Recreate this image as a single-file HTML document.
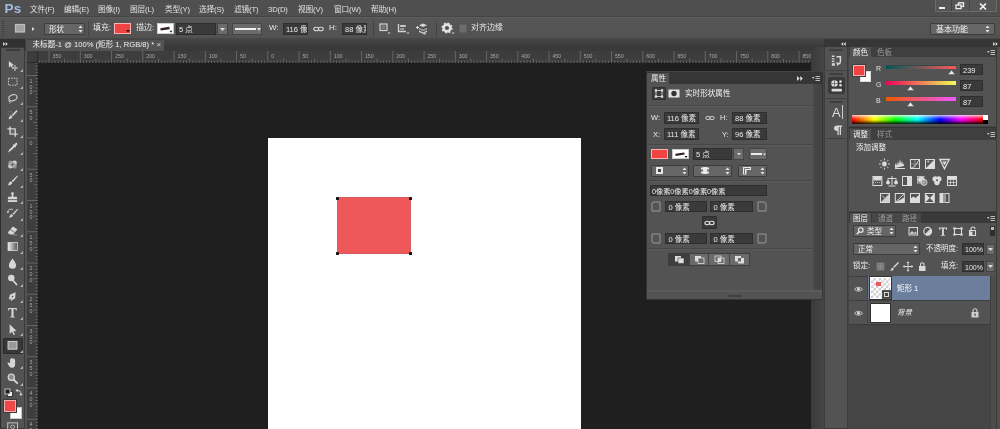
<!DOCTYPE html>
<html lang="zh-CN">
<head>
<meta charset="utf-8">
<title>Photoshop</title>
<style>
*{box-sizing:border-box;margin:0;padding:0}
html,body{width:1000px;height:429px;overflow:hidden;background:#535353}
body{position:relative;will-change:transform;font-family:"Liberation Sans","Noto Sans CJK SC",sans-serif;font-size:8px;color:#e6e6e6;line-height:1}
.a{position:absolute}
.t{position:absolute;white-space:nowrap;color:#e8e8e8}
#menubar{left:0;top:0;width:1000px;height:17px;background:#4f4f4f;border-bottom:1px solid #444}
#menubar .t{top:5.5px;font-size:7.7px;color:#e0e0e0;letter-spacing:-0.15px}
#optbar{left:0;top:17px;width:1000px;height:22px;background:linear-gradient(#565656,#525252);border-top:1px solid #5e5e5e;border-bottom:1px solid #484848}
#optbar .t{font-size:8px;top:6px}
.inp{position:absolute;background:#3a3a3a;border:1px solid #2e2e2e;color:#e8e8e8;font-size:7.5px;white-space:nowrap;overflow:hidden;padding:2px 0 0 2px}
.dd{position:absolute;background:#666;border:1px solid #3c3c3c;border-radius:1px;color:#f0f0f0;font-size:8px;white-space:nowrap;padding:2px 0 0 4px}
#tabbar{left:0;top:39px;width:1000px;height:12px;background:linear-gradient(#464646,#3a3a3a 60%,#393939)}
#canvas{left:38px;top:63px;width:773px;height:366px;background:#1f1f1f}
#doc{left:268px;top:138px;width:313px;height:291px;background:#fff}
#shape{left:337px;top:197px;width:74px;height:57px;background:#ee5858;border:1px solid #d85c5c}
.dot{position:absolute;width:3px;height:3px;background:#151515;border-radius:0.5px}
#hruler{left:27px;top:51px;width:786px;height:12px;background:#3d3d3d;border-bottom:1px solid #2a2a2a}
#vruler{left:27px;top:63px;width:11px;height:366px;background:#3d3d3d;border-right:1px solid #2a2a2a}
#tools{left:0;top:47px;width:25px;height:382px;background:#535353;border:1px solid #3a3a3a;border-left:1px solid #2c2c2c}
</style>
</head>
<body>

<!-- MENU BAR -->
<div id="menubar" class="a">
  <div class="t" style="left:4.5px;top:1.5px;font-size:13.5px;font-weight:bold;color:#a3bbe2;letter-spacing:0.2px">Ps</div>
  <div class="t" style="left:30px">文件(F)</div>
  <div class="t" style="left:64px">编辑(E)</div>
  <div class="t" style="left:98px">图像(I)</div>
  <div class="t" style="left:130px">图层(L)</div>
  <div class="t" style="left:165px">类型(Y)</div>
  <div class="t" style="left:199px">选择(S)</div>
  <div class="t" style="left:234px">滤镜(T)</div>
  <div class="t" style="left:268px">3D(D)</div>
  <div class="t" style="left:298px">视图(V)</div>
  <div class="t" style="left:334px">窗口(W)</div>
  <div class="t" style="left:371px">帮助(H)</div>
  <div class="a" style="left:935px;top:0;width:62px;height:12px;background:#565656;border:1px solid #6a6a6a;border-top:none"></div>
  <div class="a" style="left:951px;top:0;width:1px;height:11px;background:#444"></div>
  <div class="a" style="left:969px;top:0;width:1px;height:11px;background:#444"></div>
  <div class="a" style="left:939px;top:7px;width:6px;height:2px;background:#f0f0f0"></div>
  <svg class="a" style="left:955px;top:2px" width="10" height="8" viewBox="0 0 10 8"><rect x="3.5" y="0.8" width="5" height="3.6" fill="none" stroke="#f0f0f0" stroke-width="1.3"/><rect x="1" y="3" width="5" height="3.6" fill="#565656" stroke="#f0f0f0" stroke-width="1.3"/></svg>
  <svg class="a" style="left:979px;top:3px" width="8" height="7" viewBox="0 0 8 7"><path d="M1 0.5L7 6.5M7 0.5L1 6.5" stroke="#f4f4f4" stroke-width="1.6"/></svg>
</div>

<!-- OPTIONS BAR -->
<div id="optbar" class="a">
  <!-- grip -->
  <div class="a" style="left:2px;top:3px;width:2px;height:15px;background:repeating-linear-gradient(#3a3a3a 0 1px,#5a5a5a 1px 2px)"></div>
  <!-- tool preset: rectangle -->
  <svg class="a" style="left:14px;top:5px" width="24" height="12" viewBox="0 0 24 12"><rect x="1.5" y="1.5" width="9" height="7.500" fill="#a2a2a2" stroke="#c0c0c0" stroke-width="1.2"/><path d="M18 4 L20.5 6 L18 8Z" fill="#e0e0e0"/></svg>
  <div class="dd" style="left:44px;top:5px;width:41px;height:12px;font-size:7.5px">形状</div>
  <svg class="a" style="left:78px;top:7px" width="5" height="8" viewBox="0 0 5 8"><path d="M0.5 3 L2.5 0.5 L4.5 3Z M0.5 5 L2.5 7.5 L4.5 5Z" fill="#e6e6e6"/></svg>
  <div class="a" style="left:88px;top:3px;width:1px;height:16px;background:#444"></div>
  <div class="t" style="left:93px">填充:</div>
  <div class="a" style="left:114px;top:5px;width:17px;height:11px;background:#f04444;border:1px solid #f8b4b4"></div>
  <svg class="a" style="left:126px;top:12px" width="4" height="3" viewBox="0 0 4 3"><path d="M0 0h4L2 2.600z" fill="#2a1010"/></svg>
  <div class="t" style="left:136px">描边:</div>
  <div class="a" style="left:157px;top:5px;width:17px;height:11px;background:#fff;border:1px solid #ccc"></div>
  <svg class="a" style="left:157px;top:5px" width="17" height="11" viewBox="0 0 17 11"><path d="M3.500 6.400 L12.500 5" stroke="#30201e" stroke-width="2.300"/><path d="M12.500 7.800h3l-1.500 1.900z" fill="#1a1a1a"/></svg>
  <div class="inp" style="left:176px;top:5px;width:40px;height:12px">5 点</div>
  <div class="a" style="left:217px;top:5px;width:11px;height:12px;background:#6b6b6b;border:1px solid #444"></div>
  <svg class="a" style="left:220px;top:10px" width="5" height="3" viewBox="0 0 5 3"><path d="M0 0 L5 0 L2.5 3Z" fill="#ddd"/></svg>
  <div class="a" style="left:232px;top:5px;width:30px;height:12px;background:#6b6b6b;border:1px solid #444;border-radius:1px"></div>
  <div class="a" style="left:235px;top:10px;width:21px;height:2px;background:#f0f0f0"></div>
  <svg class="a" style="left:257px;top:10px" width="4" height="3" viewBox="0 0 4 3"><path d="M0 0 L4 0 L2 3Z" fill="#ddd"/></svg>
  <div class="t" style="left:269px">W:</div>
  <div class="inp" style="left:283px;top:5px;width:25px;height:12px">116 像素</div>
  <svg class="a" style="left:313px;top:8px" width="11" height="6" viewBox="0 0 11 6"><ellipse cx="3.2" cy="3" rx="2.4" ry="1.8" fill="none" stroke="#d8d8d8" stroke-width="1.1"/><ellipse cx="7.8" cy="3" rx="2.4" ry="1.8" fill="none" stroke="#d8d8d8" stroke-width="1.1"/></svg>
  <div class="t" style="left:329px">H:</div>
  <div class="inp" style="left:342px;top:5px;width:25px;height:12px">88 像素</div>
  <div class="a" style="left:373px;top:3px;width:1px;height:16px;background:#444"></div>
  <!-- path ops -->
  <svg class="a" style="left:379px;top:5px" width="12" height="12" viewBox="0 0 12 12"><rect x="1" y="1" width="7" height="6.5" fill="none" stroke="#d4d4d4" stroke-width="1.2"/><path d="M2.5 3.2H6.5M2.5 5.2H6.5" stroke="#aaa" stroke-width=".8"/><path d="M8.5 9.5h3l-1.5 1.8z" fill="#ccc"/></svg>
  <svg class="a" style="left:397px;top:5px" width="13" height="12" viewBox="0 0 13 12"><path d="M1.5 1V8.5H9" fill="none" stroke="#d4d4d4" stroke-width="1.3"/><rect x="3.2" y="2" width="5.5" height="2" fill="#c8c8c8"/><rect x="3.2" y="5" width="4" height="2" fill="#999"/><path d="M9.5 9.5h3l-1.5 1.8z" fill="#ccc"/></svg>
  <svg class="a" style="left:415px;top:4px" width="14" height="14" viewBox="0 0 14 14"><path d="M1 5.5h3M2.5 4v3" stroke="#ddd" stroke-width="1"/><path d="M8 1.5l4 1.8-4 1.8-4-1.8z" fill="#d8d8d8"/><path d="M4 5.8l4 1.8 4-1.8v1.6l-4 1.8-4-1.8z" fill="#9a9a9a"/><path d="M4 8.6l4 1.8 4-1.8v1.4l-4 1.8-4-1.8z" fill="#d0d0d0"/><circle cx="9.5" cy="11.5" r="1.3" fill="#bbb"/></svg>
  <div class="a" style="left:436px;top:3px;width:1px;height:16px;background:#444"></div>
  <!-- gear -->
  <svg class="a" style="left:441px;top:4px" width="14" height="14" viewBox="0 0 14 14"><circle cx="6" cy="6" r="3.4" fill="none" stroke="#e2e2e2" stroke-width="2.6"/><circle cx="6" cy="6" r="4.9" fill="none" stroke="#e2e2e2" stroke-width="1.4" stroke-dasharray="1.9 1.95"/><path d="M10.5 10.5h3l-1.5 1.8z" fill="#ccc"/></svg>
  <div class="a" style="left:459px;top:6px;width:8px;height:9px;background:#6c6c6c;border:1px solid #5e5e5e"></div>
  <div class="t" style="left:471px">对齐边缘</div>
  <!-- workspace -->
  <div class="dd" style="left:930px;top:5px;width:65px;height:12px;padding-left:5px">基本功能</div>
  <svg class="a" style="left:985px;top:7px" width="5" height="8" viewBox="0 0 5 8"><path d="M0.5 3 L2.5 0.5 L4.5 3Z M0.5 5 L2.5 7.5 L4.5 5Z" fill="#e6e6e6"/></svg>
</div>

<!-- TAB BAR -->
<div id="tabbar" class="a">
  <div class="a" style="left:0;top:0;width:25px;height:8px;background:#303030"></div>
  <svg class="a" style="left:3px;top:2.5px" width="5" height="4" viewBox="0 0 6 5"><path d="M0 0L2.600 2.500 0 5zM3.200 0L5.800 2.500 3.200 5z" fill="#ddd"/></svg>
  <div class="a" style="left:26px;top:1px;width:138px;height:11px;background:#535353"></div>
  <div class="t" style="left:32.5px;top:2px;font-size:7.6px;color:#f0f0f0">未标题-1 @ 100% (矩形 1, RGB/8) *</div>
  <div class="t" style="left:156.5px;top:2px;font-size:8px;color:#ddd">×</div>
</div>

<!-- RULERS -->
<div id="hruler" class="a"></div>
<div id="vruler" class="a"></div>
<svg class="a" style="left:27px;top:51px" width="786" height="12" viewBox="0 0 786 12" font-family="Liberation Sans, sans-serif" font-size="5.3" fill="#a8a8a8"><path d="M12.68 9.5V12M15.80 9.5V12M18.93 9.5V12M25.18 9.5V12M28.30 9.5V12M31.43 9.5V12M34.55 9.5V12M40.80 9.5V12M43.93 9.5V12M47.05 9.5V12M50.18 9.5V12M56.43 9.5V12M59.55 9.5V12M62.68 9.5V12M65.80 9.5V12M72.05 9.5V12M75.18 9.5V12M78.30 9.5V12M81.43 9.5V12M87.68 9.5V12M90.80 9.5V12M93.93 9.5V12M97.05 9.5V12M103.30 9.5V12M106.43 9.5V12M109.55 9.5V12M112.68 9.5V12M118.93 9.5V12M122.05 9.5V12M125.18 9.5V12M128.30 9.5V12M134.55 9.5V12M137.68 9.5V12M140.80 9.5V12M143.93 9.5V12M150.18 9.5V12M153.30 9.5V12M156.43 9.5V12M159.55 9.5V12M165.80 9.5V12M168.93 9.5V12M172.05 9.5V12M175.18 9.5V12M181.43 9.5V12M184.55 9.5V12M187.68 9.5V12M190.80 9.5V12M197.05 9.5V12M200.18 9.5V12M203.30 9.5V12M206.43 9.5V12M212.68 9.5V12M215.80 9.5V12M218.93 9.5V12M222.05 9.5V12M228.30 9.5V12M231.43 9.5V12M234.55 9.5V12M237.68 9.5V12M243.93 9.5V12M247.05 9.5V12M250.18 9.5V12M253.30 9.5V12M259.55 9.5V12M262.68 9.5V12M265.80 9.5V12M268.93 9.5V12M275.18 9.5V12M278.30 9.5V12M281.43 9.5V12M284.55 9.5V12M290.80 9.5V12M293.93 9.5V12M297.05 9.5V12M300.18 9.5V12M306.43 9.5V12M309.55 9.5V12M312.68 9.5V12M315.80 9.5V12M322.05 9.5V12M325.18 9.5V12M328.30 9.5V12M331.43 9.5V12M337.68 9.5V12M340.80 9.5V12M343.93 9.5V12M347.05 9.5V12M353.30 9.5V12M356.43 9.5V12M359.55 9.5V12M362.68 9.5V12M368.93 9.5V12M372.05 9.5V12M375.18 9.5V12M378.30 9.5V12M384.55 9.5V12M387.68 9.5V12M390.80 9.5V12M393.93 9.5V12M400.18 9.5V12M403.30 9.5V12M406.43 9.5V12M409.55 9.5V12M415.80 9.5V12M418.93 9.5V12M422.05 9.5V12M425.18 9.5V12M431.43 9.5V12M434.55 9.5V12M437.68 9.5V12M440.80 9.5V12M447.05 9.5V12M450.18 9.5V12M453.30 9.5V12M456.43 9.5V12M462.68 9.5V12M465.80 9.5V12M468.93 9.5V12M472.05 9.5V12M478.30 9.5V12M481.43 9.5V12M484.55 9.5V12M487.68 9.5V12M493.93 9.5V12M497.05 9.5V12M500.18 9.5V12M503.30 9.5V12M509.55 9.5V12M512.67 9.5V12M515.80 9.5V12M518.92 9.5V12M525.17 9.5V12M528.30 9.5V12M531.42 9.5V12M534.55 9.5V12M540.80 9.5V12M543.92 9.5V12M547.05 9.5V12M550.17 9.5V12M556.42 9.5V12M559.55 9.5V12M562.67 9.5V12M565.80 9.5V12M572.05 9.5V12M575.17 9.5V12M578.30 9.5V12M581.42 9.5V12M587.67 9.5V12M590.80 9.5V12M593.92 9.5V12M597.05 9.5V12M603.30 9.5V12M606.42 9.5V12M609.55 9.5V12M612.67 9.5V12M618.92 9.5V12M622.05 9.5V12M625.17 9.5V12M628.30 9.5V12M634.55 9.5V12M637.67 9.5V12M640.80 9.5V12M643.92 9.5V12M650.17 9.5V12M653.30 9.5V12M656.42 9.5V12M659.55 9.5V12M665.80 9.5V12M668.92 9.5V12M672.05 9.5V12M675.17 9.5V12M681.42 9.5V12M684.55 9.5V12M687.67 9.5V12M690.80 9.5V12M697.05 9.5V12M700.17 9.5V12M703.30 9.5V12M706.42 9.5V12M712.67 9.5V12M715.80 9.5V12M718.92 9.5V12M722.05 9.5V12M728.30 9.5V12M731.42 9.5V12M734.55 9.5V12M737.67 9.5V12M743.92 9.5V12M747.05 9.5V12M750.17 9.5V12M753.30 9.5V12M759.55 9.5V12M762.67 9.5V12M765.80 9.5V12M768.92 9.5V12M775.17 9.5V12M778.30 9.5V12M781.42 9.5V12M784.55 9.5V12" stroke="#707070" stroke-width="0.8"/><path d="M37.68 7.5V12M68.93 7.5V12M100.18 7.5V12M131.43 7.5V12M162.68 7.5V12M193.93 7.5V12M225.18 7.5V12M256.43 7.5V12M287.68 7.5V12M318.93 7.5V12M350.18 7.5V12M381.43 7.5V12M412.68 7.5V12M443.93 7.5V12M475.18 7.5V12M506.43 7.5V12M537.67 7.5V12M568.92 7.5V12M600.17 7.5V12M631.42 7.5V12M662.67 7.5V12M693.92 7.5V12M725.17 7.5V12M756.42 7.5V12" stroke="#707070" stroke-width="0.8"/><path d="M22.05 0V12M53.30 0V12M84.55 0V12M115.80 0V12M147.05 0V12M178.30 0V12M209.55 0V12M240.80 0V12M272.05 0V12M303.30 0V12M334.55 0V12M365.80 0V12M397.05 0V12M428.30 0V12M459.55 0V12M490.80 0V12M522.05 0V12M553.30 0V12M584.55 0V12M615.80 0V12M647.05 0V12M678.30 0V12M709.55 0V12M740.80 0V12M772.05 0V12" stroke="#6a6a6a" stroke-width="0.9"/><text x="25.5" y="6.6">350</text><text x="56.7" y="6.6">300</text><text x="88.0" y="6.6">250</text><text x="119.2" y="6.6">200</text><text x="150.5" y="6.6">150</text><text x="181.7" y="6.6">100</text><text x="213.0" y="6.6">50</text><text x="244.2" y="6.6">0</text><text x="275.4" y="6.6">50</text><text x="306.7" y="6.6">100</text><text x="337.9" y="6.6">150</text><text x="369.2" y="6.6">200</text><text x="400.4" y="6.6">250</text><text x="431.7" y="6.6">300</text><text x="462.9" y="6.6">350</text><text x="494.2" y="6.6">400</text><text x="525.4" y="6.6">450</text><text x="556.7" y="6.6">500</text><text x="587.9" y="6.6">550</text><text x="619.2" y="6.6">600</text><text x="650.4" y="6.6">650</text><text x="681.7" y="6.6">700</text><text x="712.9" y="6.6">750</text><text x="744.2" y="6.6">800</text><text x="775.4" y="6.6">850</text></svg>
<svg class="a" style="left:27px;top:63px" width="11" height="366" viewBox="0 0 11 366" font-family="Liberation Sans, sans-serif" font-size="5.3" fill="#a8a8a8" text-anchor="middle"><path d="M8.5 0.00H11M8.5 3.12H11M8.5 6.25H11M8.5 9.38H11M8.5 15.62H11M8.5 18.75H11M8.5 21.88H11M8.5 25.00H11M8.5 31.25H11M8.5 34.38H11M8.5 37.50H11M8.5 40.62H11M8.5 46.88H11M8.5 50.00H11M8.5 53.12H11M8.5 56.25H11M8.5 62.50H11M8.5 65.62H11M8.5 68.75H11M8.5 71.88H11M8.5 78.12H11M8.5 81.25H11M8.5 84.38H11M8.5 87.50H11M8.5 93.75H11M8.5 96.88H11M8.5 100.00H11M8.5 103.12H11M8.5 109.38H11M8.5 112.50H11M8.5 115.62H11M8.5 118.75H11M8.5 125.00H11M8.5 128.12H11M8.5 131.25H11M8.5 134.38H11M8.5 140.62H11M8.5 143.75H11M8.5 146.88H11M8.5 150.00H11M8.5 156.25H11M8.5 159.38H11M8.5 162.50H11M8.5 165.62H11M8.5 171.88H11M8.5 175.00H11M8.5 178.12H11M8.5 181.25H11M8.5 187.50H11M8.5 190.62H11M8.5 193.75H11M8.5 196.88H11M8.5 203.12H11M8.5 206.25H11M8.5 209.38H11M8.5 212.50H11M8.5 218.75H11M8.5 221.88H11M8.5 225.00H11M8.5 228.12H11M8.5 234.38H11M8.5 237.50H11M8.5 240.62H11M8.5 243.75H11M8.5 250.00H11M8.5 253.12H11M8.5 256.25H11M8.5 259.38H11M8.5 265.62H11M8.5 268.75H11M8.5 271.88H11M8.5 275.00H11M8.5 281.25H11M8.5 284.38H11M8.5 287.50H11M8.5 290.62H11M8.5 296.88H11M8.5 300.00H11M8.5 303.12H11M8.5 306.25H11M8.5 312.50H11M8.5 315.62H11M8.5 318.75H11M8.5 321.88H11M8.5 328.12H11M8.5 331.25H11M8.5 334.38H11M8.5 337.50H11M8.5 343.75H11M8.5 346.88H11M8.5 350.00H11M8.5 353.12H11M8.5 359.38H11M8.5 362.50H11M8.5 365.62H11" stroke="#707070" stroke-width="0.8"/><path d="M6.5 28.12H11M6.5 59.38H11M6.5 90.62H11M6.5 121.88H11M6.5 153.12H11M6.5 184.38H11M6.5 215.62H11M6.5 246.88H11M6.5 278.12H11M6.5 309.38H11M6.5 340.62H11" stroke="#707070" stroke-width="0.8"/><path d="M0 12.50H11M0 43.75H11M0 75.00H11M0 106.25H11M0 137.50H11M0 168.75H11M0 200.00H11M0 231.25H11M0 262.50H11M0 293.75H11M0 325.00H11M0 356.25H11" stroke="#6a6a6a" stroke-width="0.9"/><text x="4" y="19.7">1</text><text x="4" y="25.5">0</text><text x="4" y="31.3">0</text><text x="4" y="51.0">5</text><text x="4" y="56.8">0</text><text x="4" y="82.2">0</text><text x="4" y="113.5">5</text><text x="4" y="119.2">0</text><text x="4" y="144.7">1</text><text x="4" y="150.5">0</text><text x="4" y="156.3">0</text><text x="4" y="175.9">1</text><text x="4" y="181.8">5</text><text x="4" y="187.5">0</text><text x="4" y="207.2">2</text><text x="4" y="213.0">0</text><text x="4" y="218.8">0</text><text x="4" y="238.4">2</text><text x="4" y="244.2">5</text><text x="4" y="250.0">0</text><text x="4" y="269.7">3</text><text x="4" y="275.5">0</text><text x="4" y="281.3">0</text><text x="4" y="300.9">3</text><text x="4" y="306.8">5</text><text x="4" y="312.6">0</text><text x="4" y="332.2">4</text><text x="4" y="338.0">0</text><text x="4" y="343.8">0</text><text x="4" y="363.4">4</text><text x="4" y="369.2">5</text><text x="4" y="375.1">0</text></svg>
<div class="a" style="left:27px;top:51px;width:11px;height:12px;background:#3d3d3d;border-right:1px solid #2a2a2a;border-bottom:1px solid #2a2a2a"></div>

<!-- CANVAS -->
<div id="canvas" class="a"></div>
<div id="doc" class="a"></div>
<div id="shape" class="a"></div>
<div class="dot" style="left:336px;top:197px"></div>
<div class="dot" style="left:409px;top:197px"></div>
<div class="dot" style="left:336px;top:252px"></div>
<div class="dot" style="left:409px;top:252px"></div>

<!-- LEFT TOOLS -->
<div id="tools" class="a">
<div class="a" style="left:5px;top:1px;width:14px;height:2px;background:#3c3c3c"></div>
<div class="a" style="left:2px;top:289.5px;width:20px;height:16px;background:#383838;border:1px solid #2a2a2a;border-radius:1px"></div>
<svg class="a" style="left:4.5px;top:10.5px" width="13" height="13" viewBox="0 0 16 16"><path d="M3.5 2.5L3.5 10.5L5.8 8.6L7.6 11.5L8.8 10.8L7.2 8L10 7.8Z" fill="#d6d6d6"/><path d="M11 8.2V14M8.1 11.1H13.9" stroke="#d6d6d6" stroke-width="1"/><path d="M11 7.4l1.3 1.6h-2.6zM11 14.8l1.3-1.6h-2.6zM7.3 11.1l1.6-1.3v2.6zM14.7 11.1l-1.6-1.3v2.6z" fill="#d6d6d6"/></svg>
<svg class="a" style="left:19px;top:21.0px" width="3" height="3" viewBox="0 0 3 3"><path d="M3 0V3H0Z" fill="#b0b0b0"/></svg>
<svg class="a" style="left:4.5px;top:27.0px" width="13" height="13" viewBox="0 0 16 16"><rect x="3" y="4" width="10.5" height="8.5" fill="none" stroke="#d6d6d6" stroke-width="1.1" stroke-dasharray="2 1.3"/></svg>
<svg class="a" style="left:19px;top:37.5px" width="3" height="3" viewBox="0 0 3 3"><path d="M3 0V3H0Z" fill="#b0b0b0"/></svg>
<svg class="a" style="left:4.5px;top:43.5px" width="13" height="13" viewBox="0 0 16 16"><ellipse cx="8.5" cy="7" rx="5.2" ry="3.6" transform="rotate(-20 8.5 7)" fill="none" stroke="#d6d6d6" stroke-width="1.3"/><path d="M4.2 9.6c-1.2.8-.8 2.4.6 2.2 1-.2.6 1.5-.2 2.4" fill="none" stroke="#d6d6d6" stroke-width="1.1"/></svg>
<svg class="a" style="left:19px;top:54.0px" width="3" height="3" viewBox="0 0 3 3"><path d="M3 0V3H0Z" fill="#b0b0b0"/></svg>
<svg class="a" style="left:4.5px;top:60.0px" width="13" height="13" viewBox="0 0 16 16"><path d="M12.8 2.6L7 8.8l1.3 1.3 6-6.2z" fill="#d6d6d6"/><path d="M6.6 9.4c-1.6-.2-2.4 1-2.6 2.4-.1.8-.8 1.2-1.4 1.3 2.6 1 5.2-.3 5.2-2.5z" fill="#d6d6d6"/><ellipse cx="5" cy="6.5" rx="2.8" ry="2.2" fill="none" stroke="#9c9c9c" stroke-width=".8" stroke-dasharray="1.2 1"/></svg>
<svg class="a" style="left:19px;top:70.5px" width="3" height="3" viewBox="0 0 3 3"><path d="M3 0V3H0Z" fill="#b0b0b0"/></svg>
<svg class="a" style="left:4.5px;top:76.5px" width="13" height="13" viewBox="0 0 16 16"><path d="M5 1.8V11.3H14.5M1.8 4.8H11.3V14.5" fill="none" stroke="#d6d6d6" stroke-width="1.7"/><path d="M4.2 12.2L12.4 3.8" stroke="#9c9c9c" stroke-width=".8"/></svg>
<svg class="a" style="left:19px;top:87.0px" width="3" height="3" viewBox="0 0 3 3"><path d="M3 0V3H0Z" fill="#b0b0b0"/></svg>
<svg class="a" style="left:4.5px;top:93.0px" width="13" height="13" viewBox="0 0 16 16"><path d="M13.2 2.2c.9.9.9 2 .1 2.8l-1.4 1.4.5.6-1 1-.7-.6-5 5-2 .7-.6.9-.7-.6.8-.7.7-2 5-5-.6-.7 1-1 .6.5L11.300 3c.5-.9 1.300-1.200 1.900-.8z" fill="#d6d6d6"/></svg>
<svg class="a" style="left:19px;top:103.5px" width="3" height="3" viewBox="0 0 3 3"><path d="M3 0V3H0Z" fill="#b0b0b0"/></svg>
<svg class="a" style="left:4.5px;top:109.5px" width="13" height="13" viewBox="0 0 16 16"><ellipse cx="8" cy="8" rx="6" ry="3.4" transform="rotate(-38 8 8)" fill="#d6d6d6"/><ellipse cx="8" cy="8" rx="6" ry="3.4" transform="rotate(38 8 8)" fill="#9c9c9c" opacity=".85"/><path d="M6.5 8h3M8 6.500v3" stroke="#444" stroke-width=".8"/></svg>
<svg class="a" style="left:19px;top:120.0px" width="3" height="3" viewBox="0 0 3 3"><path d="M3 0V3H0Z" fill="#b0b0b0"/></svg>
<svg class="a" style="left:4.5px;top:126.0px" width="13" height="13" viewBox="0 0 16 16"><path d="M14 1.800L7 8.600l1.500 1.500 6.200-7.200z" fill="#d6d6d6"/><path d="M6.400 9.300c-1.800-.3-2.800 1-3 2.600-.1.900-.9 1.400-1.600 1.500 3 1.100 6-.4 5.900-2.800z" fill="#d6d6d6"/></svg>
<svg class="a" style="left:19px;top:136.5px" width="3" height="3" viewBox="0 0 3 3"><path d="M3 0V3H0Z" fill="#b0b0b0"/></svg>
<svg class="a" style="left:4.5px;top:142.5px" width="13" height="13" viewBox="0 0 16 16"><path d="M6.300 2.500c0-1.300 3.400-1.300 3.400 0 0 1.400-.8 2-.8 3.400 0 .8.500 1.300 1.300 1.300h2.300c.8 0 1.200.4 1.200 1.200v1.800H2.300V8.400c0-.8.400-1.200 1.200-1.200h2.300c.8 0 1.300-.5 1.300-1.300 0-1.400-.8-2-.8-3.400z" fill="#d6d6d6"/><rect x="2.300" y="11.200" width="11.400" height="2.300" fill="#d6d6d6"/></svg>
<svg class="a" style="left:19px;top:153.0px" width="3" height="3" viewBox="0 0 3 3"><path d="M3 0V3H0Z" fill="#b0b0b0"/></svg>
<svg class="a" style="left:4.5px;top:159.0px" width="13" height="13" viewBox="0 0 16 16"><path d="M14 2L8 8.200l1.400 1.400 5.400-6.600z" fill="#d6d6d6"/><path d="M7.400 8.900c-1.600-.2-2.400.9-2.600 2.300-.1.800-.8 1.200-1.400 1.300 2.600 1 5.200-.3 5.100-2.400z" fill="#d6d6d6"/><path d="M2 6.500a4 4 0 0 1 6.500-3" fill="none" stroke="#d6d6d6" stroke-width="1.100"/><path d="M1 5.200l1.200 2.600 1.900-2z" fill="#d6d6d6"/></svg>
<svg class="a" style="left:19px;top:169.5px" width="3" height="3" viewBox="0 0 3 3"><path d="M3 0V3H0Z" fill="#b0b0b0"/></svg>
<svg class="a" style="left:4.5px;top:175.5px" width="13" height="13" viewBox="0 0 16 16"><path d="M8.500 3l5.500 3.600-5 6.200H4.800L2 10.800z" fill="#d6d6d6"/><path d="M5.200 6.800l5.400 3.600" stroke="#555" stroke-width=".9"/><path d="M9 13.400h5" stroke="#9c9c9c" stroke-width="1"/></svg>
<svg class="a" style="left:19px;top:186.0px" width="3" height="3" viewBox="0 0 3 3"><path d="M3 0V3H0Z" fill="#b0b0b0"/></svg>
<svg class="a" style="left:4.5px;top:192.0px" width="13" height="13" viewBox="0 0 16 16"><defs><linearGradient id="gt" x1="0" x2="1"><stop offset="0" stop-color="#f0f0f0"/><stop offset="1" stop-color="#555"/></linearGradient></defs><rect x="2.500" y="3" width="11.500" height="10" fill="url(#gt)" stroke="#d8d8d8" stroke-width="1"/></svg>
<svg class="a" style="left:19px;top:202.5px" width="3" height="3" viewBox="0 0 3 3"><path d="M3 0V3H0Z" fill="#b0b0b0"/></svg>
<svg class="a" style="left:4.5px;top:208.5px" width="13" height="13" viewBox="0 0 16 16"><path d="M8 1.800c2.600 3.600 4.400 5.800 4.400 8.200a4.400 4.400 0 0 1-8.800 0c0-2.400 1.800-4.600 4.400-8.200z" fill="#d6d6d6"/></svg>
<svg class="a" style="left:19px;top:219.0px" width="3" height="3" viewBox="0 0 3 3"><path d="M3 0V3H0Z" fill="#b0b0b0"/></svg>
<svg class="a" style="left:4.5px;top:225.0px" width="13" height="13" viewBox="0 0 16 16"><circle cx="6.500" cy="6" r="4" fill="#d6d6d6"/><path d="M8.800 9.200l4.200 5" stroke="#d6d6d6" stroke-width="2.200" stroke-linecap="round"/></svg>
<svg class="a" style="left:19px;top:235.5px" width="3" height="3" viewBox="0 0 3 3"><path d="M3 0V3H0Z" fill="#b0b0b0"/></svg>
<svg class="a" style="left:4.5px;top:241.5px" width="13" height="13" viewBox="0 0 16 16"><path d="M8 1.500l4 6.500-2 5H6l-2-5z" fill="#d6d6d6" transform="rotate(35 8 8)"/><circle cx="8" cy="8" r="1" fill="#444"/><path d="M3.500 13.800l3.200-3.400" stroke="#444" stroke-width=".8"/></svg>
<svg class="a" style="left:19px;top:252.0px" width="3" height="3" viewBox="0 0 3 3"><path d="M3 0V3H0Z" fill="#b0b0b0"/></svg>
<svg class="a" style="left:4.5px;top:258.0px" width="13" height="13" viewBox="0 0 16 16"><path d="M2.800 2.500h10.400v3h-1c-.2-1.300-.6-1.700-2-1.700H9.300v8.200c0 .9.300 1.100 1.500 1.200v.8H5.200v-.8c1.200-.1 1.500-.3 1.500-1.200V3.800H5.800c-1.400 0-1.800.4-2 1.700h-1z" fill="#d6d6d6"/></svg>
<svg class="a" style="left:19px;top:268.5px" width="3" height="3" viewBox="0 0 3 3"><path d="M3 0V3H0Z" fill="#b0b0b0"/></svg>
<svg class="a" style="left:4.5px;top:274.5px" width="13" height="13" viewBox="0 0 16 16"><path d="M4.500 1.500v12l2.900-2.700 2 4 1.700-.8-2-3.900 3.900-.2z" fill="#d6d6d6"/></svg>
<svg class="a" style="left:19px;top:285.0px" width="3" height="3" viewBox="0 0 3 3"><path d="M3 0V3H0Z" fill="#b0b0b0"/></svg>
<svg class="a" style="left:4.5px;top:291.0px" width="13" height="13" viewBox="0 0 16 16"><rect x="2.500" y="3" width="11" height="9.500" fill="#9a9a9a" stroke="#d2d2d2" stroke-width="1.200"/></svg>
<svg class="a" style="left:19px;top:301.5px" width="3" height="3" viewBox="0 0 3 3"><path d="M3 0V3H0Z" fill="#b0b0b0"/></svg>
<svg class="a" style="left:4.5px;top:307.5px" width="13" height="13" viewBox="0 0 16 16"><path d="M5 8.500V4.200c0-1.200 1.500-1.200 1.500 0V3c0-1.300 1.600-1.300 1.600 0v.6c0-1.200 1.600-1.200 1.600 0v1c0-1.100 1.500-1.100 1.500 0v6c0 2.600-1.400 4-3.600 4-2 0-3-.8-4-2.600L2 9.200c-.6-1.100.7-1.800 1.400-.8z" fill="#d6d6d6"/></svg>
<svg class="a" style="left:19px;top:318.0px" width="3" height="3" viewBox="0 0 3 3"><path d="M3 0V3H0Z" fill="#b0b0b0"/></svg>
<svg class="a" style="left:4.5px;top:324.0px" width="13" height="13" viewBox="0 0 16 16"><circle cx="6.500" cy="6.500" r="3.800" fill="#8a8a8a" stroke="#d6d6d6" stroke-width="1.500"/><path d="M9.500 9.500l4.300 4.300" stroke="#d6d6d6" stroke-width="2.300" stroke-linecap="round"/></svg>
<svg class="a" style="left:19px;top:334.5px" width="3" height="3" viewBox="0 0 3 3"><path d="M3 0V3H0Z" fill="#b0b0b0"/></svg>
<svg class="a" style="left:3px;top:340px" width="20" height="10" viewBox="0 0 20 10"><rect x="3.500" y="3.500" width="5" height="5" fill="#eee" stroke="#222" stroke-width=".8"/><rect x="1" y="1" width="5" height="5" fill="#222" stroke="#ddd" stroke-width=".8"/><path d="M13 2.500c3 0 4 1 4 4" fill="none" stroke="#ddd" stroke-width="1"/><path d="M13.500 .8L11.500 2.500l2 1.700zM15.300 6l1.700 2 1.700-2z" fill="#ddd"/></svg>
<div class="a" style="left:8.5px;top:359px;width:12.5px;height:11.5px;background:#fff;border:1px solid #c8c8c8"></div>
<div class="a" style="left:2.5px;top:352px;width:12px;height:11.5px;background:#ee4848;border:1px solid #f5b0b0;outline:1px solid #3a3a3a"></div>
<svg class="a" style="left:6px;top:374px" width="12" height="7" viewBox="0 0 16 9"><rect x="1" y="1" width="13" height="9" fill="none" stroke="#d0d0d0" stroke-width="1.200"/><circle cx="7.500" cy="6.500" r="2.600" fill="none" stroke="#d0d0d0" stroke-width="1"/></svg>
</div>
<!-- /LEFT TOOLS -->

<!-- RIGHT COLUMN -->
<div class="a" style="left:811px;top:47px;width:13px;height:382px;background:linear-gradient(90deg,#3a3a3a,#464646)"></div>
<div class="a" style="left:824px;top:39px;width:176px;height:8px;background:#363636"></div>
<svg class="a" style="left:840.5px;top:41.5px" width="5" height="4" viewBox="0 0 6 5"><path d="M2.600 0L0 2.500 2.600 5zM5.800 0L3.200 2.500 5.800 5z" fill="#ddd"/></svg>
<svg class="a" style="left:992.5px;top:41.5px" width="5" height="4" viewBox="0 0 6 5"><path d="M0 0L2.600 2.500 0 5zM3.200 0L5.800 2.500 3.200 5z" fill="#ddd"/></svg>
<!-- icon column -->
<div class="a" style="left:824px;top:47px;width:24px;height:382px;background:#535353;border:1px solid #3c3c3c;border-top:none"></div>
<div class="a" style="left:829px;top:49px;width:14px;height:2px;background:#3f3f3f"></div>
<svg class="a" style="left:831px;top:55px" width="12" height="12" viewBox="0 0 14 14"><path d="M1 1.500h3M1 4.500h3M1 7.500h3" stroke="#d8d8d8" stroke-width="1.600"/><rect x="1" y="9.500" width="3.500" height="3" fill="#d8d8d8"/><path d="M6.500 2h4.500v5.500c0 1.500-1 2.500-2.500 3" fill="none" stroke="#d8d8d8" stroke-width="1.700"/><path d="M6 8l3.500 1.500L7.500 13z" fill="#d8d8d8"/></svg>
<div class="a" style="left:826px;top:70px;width:20px;height:1px;background:#404040"></div>
<div class="a" style="left:829px;top:73px;width:14px;height:2px;background:#3f3f3f"></div>
<div class="a" style="left:828px;top:77px;width:17px;height:17px;background:#3a3a3a;border-radius:2px"></div>
<svg class="a" style="left:830px;top:79px" width="14" height="14" viewBox="0 0 14 14"><circle cx="4.500" cy="4.500" r="3.300" fill="#dcdcdc"/><path d="M4.500 1.200v6.600M1.200 4.500h6.600" stroke="#555" stroke-width=".7"/><circle cx="10.500" cy="2.600" r="1.300" fill="#dcdcdc"/><circle cx="10.500" cy="6.200" r="1.300" fill="#dcdcdc"/><rect x="1.500" y="9.800" width="10.500" height="2.600" rx="1" fill="#dcdcdc"/></svg>
<div class="a" style="left:826px;top:98px;width:20px;height:1px;background:#404040"></div>
<div class="a" style="left:829px;top:101px;width:14px;height:2px;background:#3f3f3f"></div>
<div class="t" style="left:832px;top:106px;font-size:13px;color:#dcdcdc">A</div>
<div class="a" style="left:842px;top:105px;width:1px;height:14px;background:#ccc"></div>
<svg class="a" style="left:833px;top:125px" width="10" height="11" viewBox="0 0 11 12"><path d="M4.500 0.500H10v1.600H8.800V11H7.400V2.100H6.300V11H4.900V6.500C2.500 6.500 1 5.200 1 3.500S2.500 0.500 4.500 0.500z" fill="#d6d6d6"/></svg>
<div class="a" style="left:826px;top:138px;width:20px;height:1px;background:#404040"></div>

<!-- panel well background -->
<div class="a" style="left:848px;top:47px;width:152px;height:382px;background:#454545"></div>
<div class="a" style="left:996px;top:47px;width:4px;height:382px;background:#505050;border-left:1px solid #3a3a3a"></div>

<!-- COLOR PANEL -->
<div class="a" style="left:849px;top:47px;width:147px;height:10px;background:#3f3f3f"></div>
<div class="a" style="left:850px;top:47px;width:21px;height:11px;background:#535353"></div>
<div class="t" style="left:853px;top:49px;font-size:7.500px;color:#f0f0f0">颜色</div>
<div class="t" style="left:877px;top:49px;font-size:7.500px;color:#9a9a9a">色板</div>
<svg class="a" style="left:987px;top:50px" width="8" height="5" viewBox="0 0 8 5"><path d="M0 1h2.500L1.250 3z" fill="#ccc"/><path d="M3.500 .500H8M3.500 2.500H8M3.500 4.500H8" stroke="#ccc" stroke-width=".9"/></svg>
<div class="a" style="left:849px;top:57px;width:147px;height:69px;background:#535353"></div>
<div class="a" style="left:860px;top:71px;width:11px;height:11px;background:#fff;border:1px solid #ddd"></div>
<div class="a" style="left:853px;top:65px;width:12px;height:11px;background:#f04444;border:1px solid #f8b0b0;outline:1px solid #3f3f3f"></div>
<div class="t" style="left:876px;top:65px;font-size:7px;color:#e0e0e0">R</div>
<div class="t" style="left:876px;top:81px;font-size:7px;color:#e0e0e0">G</div>
<div class="t" style="left:876px;top:97px;font-size:7px;color:#e0e0e0">B</div>
<div class="a" style="left:886px;top:65px;width:70px;height:4px;background:linear-gradient(90deg,#005757,#ff5757);border-top:1px solid #2e4a4a"></div>
<div class="a" style="left:886px;top:81px;width:70px;height:4px;background:linear-gradient(90deg,#ee0057,#eeff57)"></div>
<div class="a" style="left:886px;top:97px;width:70px;height:4px;background:linear-gradient(90deg,#ee5700,#ee57ff)"></div>
<svg class="a" style="left:948px;top:70px" width="7" height="5" viewBox="0 0 7 5"><path d="M3.500 0L7 4.500H0z" fill="#e8e8e8" stroke="#666" stroke-width=".6"/></svg>
<svg class="a" style="left:907px;top:86px" width="7" height="5" viewBox="0 0 7 5"><path d="M3.500 0L7 4.500H0z" fill="#e8e8e8" stroke="#666" stroke-width=".6"/></svg>
<svg class="a" style="left:907px;top:102px" width="7" height="5" viewBox="0 0 7 5"><path d="M3.500 0L7 4.500H0z" fill="#e8e8e8" stroke="#666" stroke-width=".6"/></svg>
<div class="inp" style="left:960px;top:64px;width:23px;height:11px;padding-top:2px">239</div>
<div class="inp" style="left:960px;top:80px;width:23px;height:11px;padding-top:2px">87</div>
<div class="inp" style="left:960px;top:96px;width:23px;height:11px;padding-top:2px">87</div>
<div class="a" style="left:852px;top:115px;width:131px;height:9px;background:linear-gradient(90deg,#f00 0%,#ff0 17%,#0f0 33%,#0ff 50%,#00f 67%,#f0f 83%,#f00 100%)"></div>
<div class="a" style="left:852px;top:115px;width:131px;height:9px;background:linear-gradient(180deg,rgba(255,255,255,.75) 0%,rgba(255,255,255,0) 45%,rgba(0,0,0,0) 55%,rgba(0,0,0,.9) 100%)"></div>
<div class="a" style="left:983px;top:115px;width:5px;height:5px;background:#fff"></div>
<div class="a" style="left:983px;top:120px;width:5px;height:4px;background:#000"></div>
<!-- ADJUSTMENTS PANEL -->
<div class="a" style="left:849px;top:127px;width:147px;height:13px;background:#3f3f3f;border-top:1px solid #333"></div>
<div class="a" style="left:850px;top:129px;width:21px;height:12px;background:#535353"></div>
<div class="t" style="left:853px;top:131px;font-size:7.500px;color:#f0f0f0">调整</div>
<div class="t" style="left:877px;top:131px;font-size:7.500px;color:#9a9a9a">样式</div>
<svg class="a" style="left:987px;top:132px" width="8" height="5" viewBox="0 0 8 5"><path d="M0 1h2.500L1.250 3z" fill="#ccc"/><path d="M3.500 .500H8M3.500 2.500H8M3.500 4.500H8" stroke="#ccc" stroke-width=".9"/></svg>
<div class="a" style="left:849px;top:140px;width:147px;height:71px;background:#535353"></div>
<div class="t" style="left:856px;top:144px;font-size:7.500px;color:#f2f2f2">添加调整</div>
<svg class="a" style="left:870px;top:156px" width="90" height="50" viewBox="0 0 90 50" fill="none" stroke="#dcdcdc">
  <!-- row 1 (cy=8): x = 14.4,30,45,60,74.5 -->
  <circle cx="14.400" cy="8" r="2.400" fill="#dcdcdc" stroke="none"/>
  <path d="M14.400 2.500v1.800M14.400 11.700v1.800M8.900 8h1.800M18.100 8h1.800M10.500 4.100l1.300 1.300M17 10.600l1.300 1.300M10.500 11.900l1.300-1.300M17 5.400l1.300-1.300" stroke-width="1"/>
  <path d="M25 12V9l1-2 1 3 1-5 1 4 1-6 1 5 1-3 1 4 1-2v3z" fill="#dcdcdc" stroke="none"/><path d="M25 12.500h10" stroke-width="1"/>
  <rect x="40.500" y="3.500" width="9" height="9" stroke-width="1"/><path d="M41 12c3-.500 5-3 8-8" stroke-width=".9"/><path d="M40.500 8h9M45 3.500v9" stroke-width=".4"/>
  <rect x="55.500" y="3.500" width="9" height="9" stroke-width="1"/><path d="M55.500 12.500l9-9v9z" fill="#dcdcdc" stroke="none"/><path d="M57 5.500h2.400M58.200 4.300v2.400" stroke-width=".7"/>
  <path d="M69.800 3.500h9.400L74.500 12.700z" stroke-width="1.300"/><path d="M72.300 5.400h4.400L74.500 9.500z" fill="#dcdcdc" stroke="none"/>
  <!-- row 2 (cy=25): x= 7.4,22,37,52.4,67,82 -->
  <rect x="2.900" y="20.500" width="9" height="9" stroke-width="1"/><rect x="3.400" y="21" width="8" height="3.500" fill="#dcdcdc" stroke="none"/><path d="M3 26.500h9" stroke-width=".7" stroke-dasharray="1 1"/>
  <path d="M22 20v9M17.500 22.500h9M18.500 30h7" stroke-width="1"/><path d="M16 26.500a2 2 0 0 0 4 0l-2-3.500zM24 26.500a2 2 0 0 0 4 0l-2-3.500z" fill="#dcdcdc" stroke="none"/>
  <rect x="32.500" y="20.500" width="9" height="9" stroke-width="1"/><rect x="37" y="20.500" width="4.500" height="9" fill="#dcdcdc" stroke="none"/>
  <circle cx="51" cy="23.600" r="3" fill="#dcdcdc" stroke="none"/><circle cx="54" cy="26.400" r="3" fill="#888" stroke="#dcdcdc" stroke-width=".9"/><rect x="47.500" y="20.500" width="6.500" height="6.500" stroke-width=".7"/>
  <circle cx="65.200" cy="23" r="2.700" fill="#dcdcdc" stroke="none"/><circle cx="68.800" cy="23" r="2.700" fill="#dcdcdc" stroke="none"/><circle cx="67" cy="26.500" r="2.700" fill="#dcdcdc" stroke="none"/><circle cx="67" cy="24.300" r="1" fill="#555" stroke="none"/>
  <rect x="77.500" y="20.500" width="9" height="9" stroke-width="1"/><path d="M77.500 23.500h9M77.500 26.500h9M80.500 20.500v9M83.500 20.500v9" stroke-width=".7"/><rect x="77.500" y="20.500" width="9" height="3" fill="#dcdcdc" stroke="none"/>
  <!-- row 3 (cy=42): x=15,29.800,45,59.800,74.500 -->
  <rect x="10.500" y="37.500" width="9" height="9" stroke-width="1"/><path d="M10.500 46.500l9-9v9z" fill="#dcdcdc" stroke="none" opacity=".9"/><path d="M12 39.500l2.500 2.500" stroke-width=".8"/>
  <rect x="25.300" y="37.500" width="9" height="9" stroke-width="1"/><path d="M25.300 46.500l9-9" stroke-width="1"/><path d="M25.300 46.500h9v-5z" fill="#dcdcdc" stroke="none"/>
  <rect x="40.500" y="37.500" width="9" height="9" stroke-width="1"/><path d="M40.500 46.500v-4l3-2 2 1.500 4-3.500v8z" fill="#dcdcdc" stroke="none"/>
  <rect x="55.300" y="37.500" width="9" height="9" stroke-width="1"/><path d="M55.300 37.500l4.500 4.500 4.500-4.500v9l-4.500-4.500-4.500 4.500z" fill="#dcdcdc" stroke="none"/>
  <rect x="70" y="37.500" width="9" height="9" stroke-width="1"/><rect x="70" y="37.500" width="3" height="9" fill="#dcdcdc" stroke="none"/><rect x="73" y="37.500" width="3" height="9" fill="#999" stroke="none"/>
</svg>

<!-- LAYERS PANEL -->
<div class="a" style="left:849px;top:212px;width:147px;height:11px;background:#3a3a3a;border-top:1px solid #333"></div>
<div class="a" style="left:872px;top:213px;width:49px;height:10px;background:#474747"></div>
<div class="a" style="left:850px;top:213px;width:21px;height:11px;background:#535353"></div>
<div class="t" style="left:853px;top:215px;font-size:7.500px;color:#f0f0f0">图层</div>
<div class="t" style="left:878px;top:215px;font-size:7.500px;color:#9a9a9a">通道</div>
<div class="t" style="left:902px;top:215px;font-size:7.500px;color:#9a9a9a">路径</div>
<svg class="a" style="left:987px;top:216px" width="8" height="5" viewBox="0 0 8 5"><path d="M0 1h2.500L1.250 3z" fill="#ccc"/><path d="M3.500 .500H8M3.500 2.500H8M3.500 4.500H8" stroke="#ccc" stroke-width=".9"/></svg>
<div class="a" style="left:849px;top:223px;width:147px;height:53px;background:#535353"></div>
<!-- filter row -->
<div class="dd" style="left:853px;top:225px;width:43px;height:12px;padding:2px 0 0 13px;font-size:7.500px">类型</div>
<svg class="a" style="left:856px;top:227px" width="8" height="8" viewBox="0 0 8 8"><circle cx="4.800" cy="3" r="2.300" fill="none" stroke="#eee" stroke-width="1.100"/><path d="M3.200 4.700L.800 7.300" stroke="#eee" stroke-width="1.300"/></svg>
<svg class="a" style="left:889px;top:227px" width="5" height="8" viewBox="0 0 5 8"><path d="M0.500 3 L2.500 0.500 L4.500 3Z M0.500 5 L2.500 7.500 L4.500 5Z" fill="#e6e6e6"/></svg>
<svg class="a" style="left:908px;top:226px" width="72" height="11" viewBox="0 0 72 11" fill="none" stroke="#dadada">
  <rect x="1" y="1.500" width="8.500" height="7.500" stroke-width="1"/><path d="M1.500 8l2.500-3 2 2 1.500-1.500 1.500 2z" fill="#dadada" stroke="none"/>
  <circle cx="19.700" cy="5.300" r="3.900" stroke-width="1.100"/><path d="M17 8.200A3.900 3.900 0 0 0 22.500 2.500z" fill="#dadada" stroke="none"/>
  <path d="M31 1.500h8v2.200h-.800c-.200-.900-.500-1.200-1.500-1.200h-.800v5.700c0 .600.300.800 1.200.900v.600h-4.200v-.600c.900-.100 1.200-.300 1.200-.900V2.500h-.800c-1 0-1.300.300-1.500 1.200H31z" fill="#dadada" stroke="none"/>
  <rect x="46.500" y="2.500" width="7" height="6" stroke-width="1"/><rect x="45.300" y="1.300" width="2.200" height="2.200" fill="#dadada" stroke="none"/><rect x="52.400" y="1.300" width="2.200" height="2.200" fill="#dadada" stroke="none"/><rect x="45.300" y="7.400" width="2.200" height="2.200" fill="#dadada" stroke="none"/><rect x="52.400" y="7.400" width="2.200" height="2.200" fill="#dadada" stroke="none"/>
  <path d="M61.500 4.500V9.500h6V4.500zM63 4.500V3a2 2 0 0 1 4 0" stroke-width="1.100"/><rect x="61.500" y="5.500" width="3" height="4" fill="#dadada" stroke="none"/>
</svg>
<div class="a" style="left:990px;top:226px;width:5px;height:10px;background:#2e2e2e;border-radius:1px"></div>
<div class="a" style="left:991px;top:227px;width:3px;height:3px;background:#bbb"></div>
<!-- blend row -->
<div class="dd" style="left:853px;top:243px;width:67px;height:12px;font-size:7.500px">正常</div>
<svg class="a" style="left:913px;top:245px" width="5" height="8" viewBox="0 0 5 8"><path d="M0.500 3 L2.500 0.500 L4.500 3Z M0.500 5 L2.500 7.500 L4.500 5Z" fill="#e6e6e6"/></svg>
<div class="t" style="left:926px;top:245px;font-size:7.500px;color:#eee">不透明度:</div>
<div class="inp" style="left:962px;top:243px;width:22px;height:12px;padding-top:2px;font-size:7px">100%</div>
<div class="a" style="left:986px;top:244px;width:9px;height:11px;background:#6b6b6b;border:1px solid #444"></div>
<svg class="a" style="left:988px;top:248px" width="5" height="3" viewBox="0 0 5 3"><path d="M0 0 L5 0 L2.500 3Z" fill="#ddd"/></svg>
<!-- lock row -->
<div class="t" style="left:853px;top:262px;font-size:7.500px;color:#eee">锁定:</div>
<svg class="a" style="left:876px;top:261px" width="52" height="11" viewBox="0 0 52 11" fill="none" stroke="#d8d8d8">
  <rect x="1" y="2" width="7" height="7" fill="#7a7a7a" stroke="#888" stroke-width=".6"/><path d="M1 5.500h7M4.500 2v7" stroke="#999" stroke-width=".5"/>
  <path d="M22.500 1.500L17.500 6.500" stroke-width="1.400"/><path d="M17 6.800c-1.300-.100-1.800.800-1.900 1.700 0 .500-.500.800-.900.900 1.800.700 3.500-.200 3.500-1.700z" fill="#d8d8d8" stroke="none"/>
  <path d="M32 1v9M27.500 5.500h9" stroke-width="1"/><path d="M32 .2l1.500 1.900h-3zM32 10.800l1.500-1.900h-3zM26.700 5.500l1.900-1.500v3zM37.300 5.500l-1.900-1.500v3z" fill="#d8d8d8" stroke="none"/>
  <rect x="43" y="5" width="6.500" height="5" fill="#d8d8d8" stroke="none"/><path d="M44.500 5V3.500a1.750 1.750 0 0 1 3.500 0V5" stroke-width="1.100"/>
</svg>
<div class="t" style="left:941px;top:262px;font-size:7.500px;color:#eee">填充:</div>
<div class="inp" style="left:962px;top:261px;width:22px;height:11px;padding-top:2px;font-size:7px">100%</div>
<div class="a" style="left:986px;top:261px;width:9px;height:11px;background:#6b6b6b;border:1px solid #444"></div>
<svg class="a" style="left:988px;top:265px" width="5" height="3" viewBox="0 0 5 3"><path d="M0 0 L5 0 L2.500 3Z" fill="#ddd"/></svg>
<!-- layer rows -->
<div class="a" style="left:849px;top:276px;width:141px;height:24px;background:#535353;border-top:1px solid #3f3f3f"></div>
<div class="a" style="left:868px;top:276px;width:122px;height:24px;background:#6b7f9d"></div>
<div class="a" style="left:849px;top:300px;width:141px;height:25px;background:#535353;border-top:1px solid #3f3f3f;border-bottom:1px solid #3a3a3a"></div>
<div class="a" style="left:867px;top:276px;width:1px;height:49px;background:#444"></div>
<div class="a" style="left:990px;top:276px;width:6px;height:153px;background:#4d4d4d;border-left:1px solid #3f3f3f"></div>
<svg class="a" style="left:854px;top:285.500px" width="9" height="6.500" viewBox="0 0 11 8"><path d="M.500 4C2.500 1 8.500 1 10.500 4 8.500 7 2.500 7 .500 4z" fill="none" stroke="#e0e0e0" stroke-width="1"/><circle cx="5.500" cy="4" r="1.700" fill="#e0e0e0"/></svg>
<svg class="a" style="left:854px;top:309.500px" width="9" height="6.500" viewBox="0 0 11 8"><path d="M.500 4C2.500 1 8.500 1 10.500 4 8.500 7 2.500 7 .500 4z" fill="none" stroke="#e0e0e0" stroke-width="1"/><circle cx="5.500" cy="4" r="1.700" fill="#e0e0e0"/></svg>
<!-- thumb 1 (checker) -->
<div class="a" style="left:870px;top:277px;width:21px;height:22px;border:1px solid #fff;outline:1px solid #333;background-color:#fff;background-image:linear-gradient(45deg,#ccc 25%,transparent 25%,transparent 75%,#ccc 75%),linear-gradient(45deg,#ccc 25%,transparent 25%,transparent 75%,#ccc 75%);background-size:5px 5px;background-position:0 0,2.500px 2.500px"></div>
<div class="a" style="left:876px;top:282px;width:5px;height:4px;background:#e85a5a"></div>
<div class="a" style="left:882px;top:290px;width:9px;height:9px;background:#444;border:1px solid #555"></div>
<div class="a" style="left:884px;top:292px;width:5px;height:5px;border:1px solid #d8d8d8"></div>
<div class="t" style="left:897px;top:285px;font-size:7.500px;color:#fff">矩形 1</div>
<!-- thumb 2 -->
<div class="a" style="left:871px;top:304px;width:19px;height:18px;background:#fff;outline:1px solid #333"></div>
<div class="t" style="left:897px;top:309px;font-size:7.500px;color:#f0f0f0;font-style:italic">背景</div>
<svg class="a" style="left:971px;top:308px" width="8" height="10" viewBox="0 0 8 10"><rect x="0.500" y="4" width="7" height="5.500" fill="#d0d0d0"/><path d="M2 4V2.800a2 2 0 0 1 4 0V4" fill="none" stroke="#d0d0d0" stroke-width="1.100"/><rect x="3.300" y="5.500" width="1.400" height="2.300" fill="#555"/></svg>
<!-- /RIGHT COLUMN -->

<!-- PROPERTIES PANEL -->
<div class="a" style="left:646px;top:71px;width:177px;height:229px;background:#535353;border:1px solid #343434;border-top-color:#444"></div>
<div class="a" style="left:647px;top:72px;width:175px;height:12px;background:#363636"></div>
<div class="a" style="left:647px;top:73px;width:22px;height:12px;background:#535353"></div>
<div class="t" style="left:651px;top:75px;font-size:7.500px;color:#f0f0f0">属性</div>
<svg class="a" style="left:797px;top:76px" width="6" height="5" viewBox="0 0 6 5"><path d="M0 0L2.600 2.500 0 5zM3.200 0L5.800 2.500 3.200 5z" fill="#ddd"/></svg>
<svg class="a" style="left:812px;top:76px" width="8" height="5" viewBox="0 0 8 5"><path d="M0 1h2.500L1.250 3z" fill="#ccc"/><path d="M3.500 .500H8M3.500 2.500H8M3.500 4.500H8" stroke="#ccc" stroke-width=".9"/></svg>
<div class="a" style="left:813px;top:84px;width:9px;height:206px;background:#454545;border-left:1px solid #4c4c4c"></div>
<div class="a" style="left:647px;top:290px;width:175px;height:2px;background:#5b5b5b"></div>
<div class="a" style="left:728px;top:295px;width:14px;height:2px;background:#404040"></div>
<!-- icon row -->
<div class="a" style="left:652px;top:87px;width:14px;height:13px;background:#3c3c3c;border:1px solid #2f2f2f;border-radius:1px"></div>
<svg class="a" style="left:654px;top:89px" width="10" height="9" viewBox="0 0 10 9"><rect x="2" y="1.500" width="6" height="6" fill="none" stroke="#d0d0d0" stroke-width=".9"/><rect x=".8" y=".3" width="2.200" height="2.200" fill="#e0e0e0"/><rect x="7" y=".3" width="2.200" height="2.200" fill="#e0e0e0"/><rect x=".8" y="6.500" width="2.200" height="2.200" fill="#e0e0e0"/><rect x="7" y="6.500" width="2.200" height="2.200" fill="#e0e0e0"/></svg>
<svg class="a" style="left:668px;top:89px" width="12" height="9" viewBox="0 0 12 9"><rect x=".500" y=".500" width="11" height="8" fill="#e4e4e4"/><circle cx="6" cy="4.500" r="2.700" fill="#333"/></svg>
<div class="t" style="left:685px;top:90px;font-size:7.600px;color:#f2f2f2">实时形状属性</div>
<div class="a" style="left:647px;top:105px;width:166px;height:2px;background:#464646;border-bottom:1px solid #5a5a5a"></div>
<!-- W/H row -->
<div class="t" style="left:651px;top:114px;font-size:7.500px">W:</div>
<div class="inp" style="left:664px;top:112px;width:35px;height:12px">116 像素</div>
<svg class="a" style="left:705px;top:115px" width="10" height="6" viewBox="0 0 10 6"><ellipse cx="3" cy="3" rx="2.200" ry="1.700" fill="none" stroke="#d0d0d0" stroke-width="1"/><ellipse cx="7" cy="3" rx="2.200" ry="1.700" fill="none" stroke="#d0d0d0" stroke-width="1"/></svg>
<div class="t" style="left:720px;top:114px;font-size:7.500px">H:</div>
<div class="inp" style="left:732px;top:112px;width:35px;height:12px">88 像素</div>
<div class="t" style="left:653px;top:131px;font-size:7.500px">X:</div>
<div class="inp" style="left:664px;top:128px;width:35px;height:12px">111 像素</div>
<div class="t" style="left:722px;top:131px;font-size:7.500px">Y:</div>
<div class="inp" style="left:732px;top:128px;width:35px;height:12px">96 像素</div>
<div class="a" style="left:647px;top:144px;width:166px;height:2px;background:#464646;border-bottom:1px solid #5a5a5a"></div>
<!-- swatch row -->
<div class="a" style="left:651px;top:149px;width:17px;height:10px;background:#f04444;border:1px solid #f8b4b4"></div>
<div class="a" style="left:672px;top:149px;width:17px;height:10px;background:#fff;border:1px solid #ccc"></div>
<svg class="a" style="left:672px;top:149px" width="17" height="10" viewBox="0 0 17 10"><path d="M3.500 5.900 L12.500 4.500" stroke="#30201e" stroke-width="2.200"/><path d="M12.500 7h3l-1.500 1.900z" fill="#1a1a1a"/></svg>
<div class="inp" style="left:693px;top:148px;width:39px;height:12px">5 点</div>
<div class="a" style="left:733px;top:148px;width:11px;height:12px;background:#6b6b6b;border:1px solid #444"></div>
<svg class="a" style="left:736.500px;top:153px" width="4" height="2.500" viewBox="0 0 5 3"><path d="M0 0 L5 0 L2.500 3Z" fill="#ddd"/></svg>
<div class="a" style="left:749px;top:148px;width:18px;height:12px;background:#6b6b6b;border:1px solid #444;border-radius:1px"></div>
<div class="a" style="left:751px;top:153.200px;width:11px;height:1.600px;background:#ececec"></div>
<svg class="a" style="left:763px;top:153px" width="3" height="3" viewBox="0 0 4 3"><path d="M0 0 L4 0 L2 3Z" fill="#ddd"/></svg>
<!-- dropdown row -->
<div class="dd" style="left:651px;top:164.500px;width:38px;height:12px"></div>
<div class="dd" style="left:693px;top:164.500px;width:39px;height:12px"></div>
<div class="dd" style="left:738px;top:164.500px;width:29px;height:12px"></div>
<svg class="a" style="left:655px;top:166px" width="10" height="9" viewBox="0 0 10 9"><rect x="1" y="1" width="7" height="7" fill="#e8e8e8"/><rect x="3" y="3" width="3" height="3" fill="#444"/></svg>
<svg class="a" style="left:700px;top:166px" width="10" height="9" viewBox="0 0 10 9"><path d="M1 2.500h8M1 6.500h8" stroke="#e8e8e8" stroke-width="2"/><rect x="3" y="1" width="4" height="7" fill="#e8e8e8"/></svg>
<svg class="a" style="left:742px;top:166px" width="10" height="9" viewBox="0 0 10 9"><path d="M1 8.500V1H9V4H4.500V8.500z" fill="#e8e8e8"/><path d="M2.500 8V2.500H8" fill="none" stroke="#555" stroke-width=".8"/></svg>
<svg class="a" style="left:682px;top:167px" width="5" height="8" viewBox="0 0 5 8"><path d="M0.500 3 L2.500 0.500 L4.500 3Z M0.500 5 L2.500 7.500 L4.500 5Z" fill="#e6e6e6"/></svg>
<svg class="a" style="left:725px;top:167px" width="5" height="8" viewBox="0 0 5 8"><path d="M0.500 3 L2.500 0.500 L4.500 3Z M0.500 5 L2.500 7.500 L4.500 5Z" fill="#e6e6e6"/></svg>
<svg class="a" style="left:760px;top:167px" width="5" height="8" viewBox="0 0 5 8"><path d="M0.500 3 L2.500 0.500 L4.500 3Z M0.500 5 L2.500 7.500 L4.500 5Z" fill="#e6e6e6"/></svg>
<div class="a" style="left:647px;top:180px;width:166px;height:2px;background:#464646;border-bottom:1px solid #5a5a5a"></div>
<!-- corner radius -->
<div class="inp" style="left:650px;top:185px;width:117px;height:11px;padding:1.500px 0 0 1px;font-size:7.200px">0像素0像素0像素0像素</div>
<svg class="a" style="left:651px;top:201px" width="10" height="11" viewBox="0 0 10 11"><path d="M1 10V3a2 2 0 0 1 2-2H9V10z" fill="none" stroke="#999" stroke-width="1"/></svg>
<div class="inp" style="left:665px;top:201px;width:42px;height:11px;padding:1.500px 0 0 2.500px">0 像素</div>
<div class="inp" style="left:710px;top:201px;width:43px;height:11px;padding:1.500px 0 0 2.500px">0 像素</div>
<svg class="a" style="left:757px;top:201px" width="10" height="11" viewBox="0 0 10 11"><path d="M9 10V3a2 2 0 0 0-2-2H1V10z" fill="none" stroke="#999" stroke-width="1"/></svg>
<div class="a" style="left:702px;top:216px;width:15px;height:13px;background:#3a3a3a;border:1px solid #2e2e2e;border-radius:1px"></div>
<svg class="a" style="left:704px;top:220px" width="11" height="6" viewBox="0 0 11 6"><ellipse cx="3.200" cy="3" rx="2.300" ry="1.700" fill="none" stroke="#e0e0e0" stroke-width="1.100"/><ellipse cx="7.800" cy="3" rx="2.300" ry="1.700" fill="none" stroke="#e0e0e0" stroke-width="1.100"/></svg>
<svg class="a" style="left:651px;top:233px" width="10" height="11" viewBox="0 0 10 11"><path d="M1 1V8a2 2 0 0 0 2 2H9V1z" fill="none" stroke="#999" stroke-width="1"/></svg>
<div class="inp" style="left:665px;top:233px;width:42px;height:11px;padding:1.500px 0 0 2.500px">0 像素</div>
<div class="inp" style="left:710px;top:233px;width:43px;height:11px;padding:1.500px 0 0 2.500px">0 像素</div>
<svg class="a" style="left:757px;top:233px" width="10" height="11" viewBox="0 0 10 11"><path d="M9 1V8a2 2 0 0 1-2 2H1V1z" fill="none" stroke="#999" stroke-width="1"/></svg>
<div class="a" style="left:647px;top:248px;width:166px;height:2px;background:#464646;border-bottom:1px solid #5a5a5a"></div>
<!-- path op buttons -->
<div class="a" style="left:668px;top:253px;width:82px;height:13px;background:#6a6a6a;border:1px solid #3e3e3e"></div>
<div class="a" style="left:669px;top:254px;width:20px;height:11px;background:#3e3e3e"></div>
<div class="a" style="left:689px;top:254px;width:1px;height:11px;background:#444"></div>
<div class="a" style="left:708px;top:254px;width:1px;height:11px;background:#444"></div>
<div class="a" style="left:729px;top:254px;width:1px;height:11px;background:#444"></div>
<svg class="a" style="left:669px;top:254px" width="80" height="11" viewBox="0 0 80 11">
  <rect x="6" y="2" width="6" height="5.500" fill="#ddd"/><rect x="9" y="4" width="6" height="5.500" fill="#ddd" stroke="#3e3e3e" stroke-width=".6"/>
  <rect x="26" y="2" width="6" height="5.500" fill="#ddd"/><rect x="29" y="4" width="6" height="5.500" fill="#6a6a6a" stroke="#ddd" stroke-width=".8"/>
  <rect x="46" y="2" width="6" height="5.500" fill="none" stroke="#ddd" stroke-width=".8"/><rect x="49" y="4" width="6" height="5.500" fill="none" stroke="#ddd" stroke-width=".8"/><rect x="49" y="4" width="3" height="3.500" fill="#ddd"/>
  <rect x="66" y="2" width="6" height="5.500" fill="#ddd"/><rect x="69" y="4" width="6" height="5.500" fill="#ddd"/><rect x="69" y="4" width="3" height="3.500" fill="#6a6a6a"/>
</svg>
<!-- /PROPERTIES PANEL -->

</body>
</html>
